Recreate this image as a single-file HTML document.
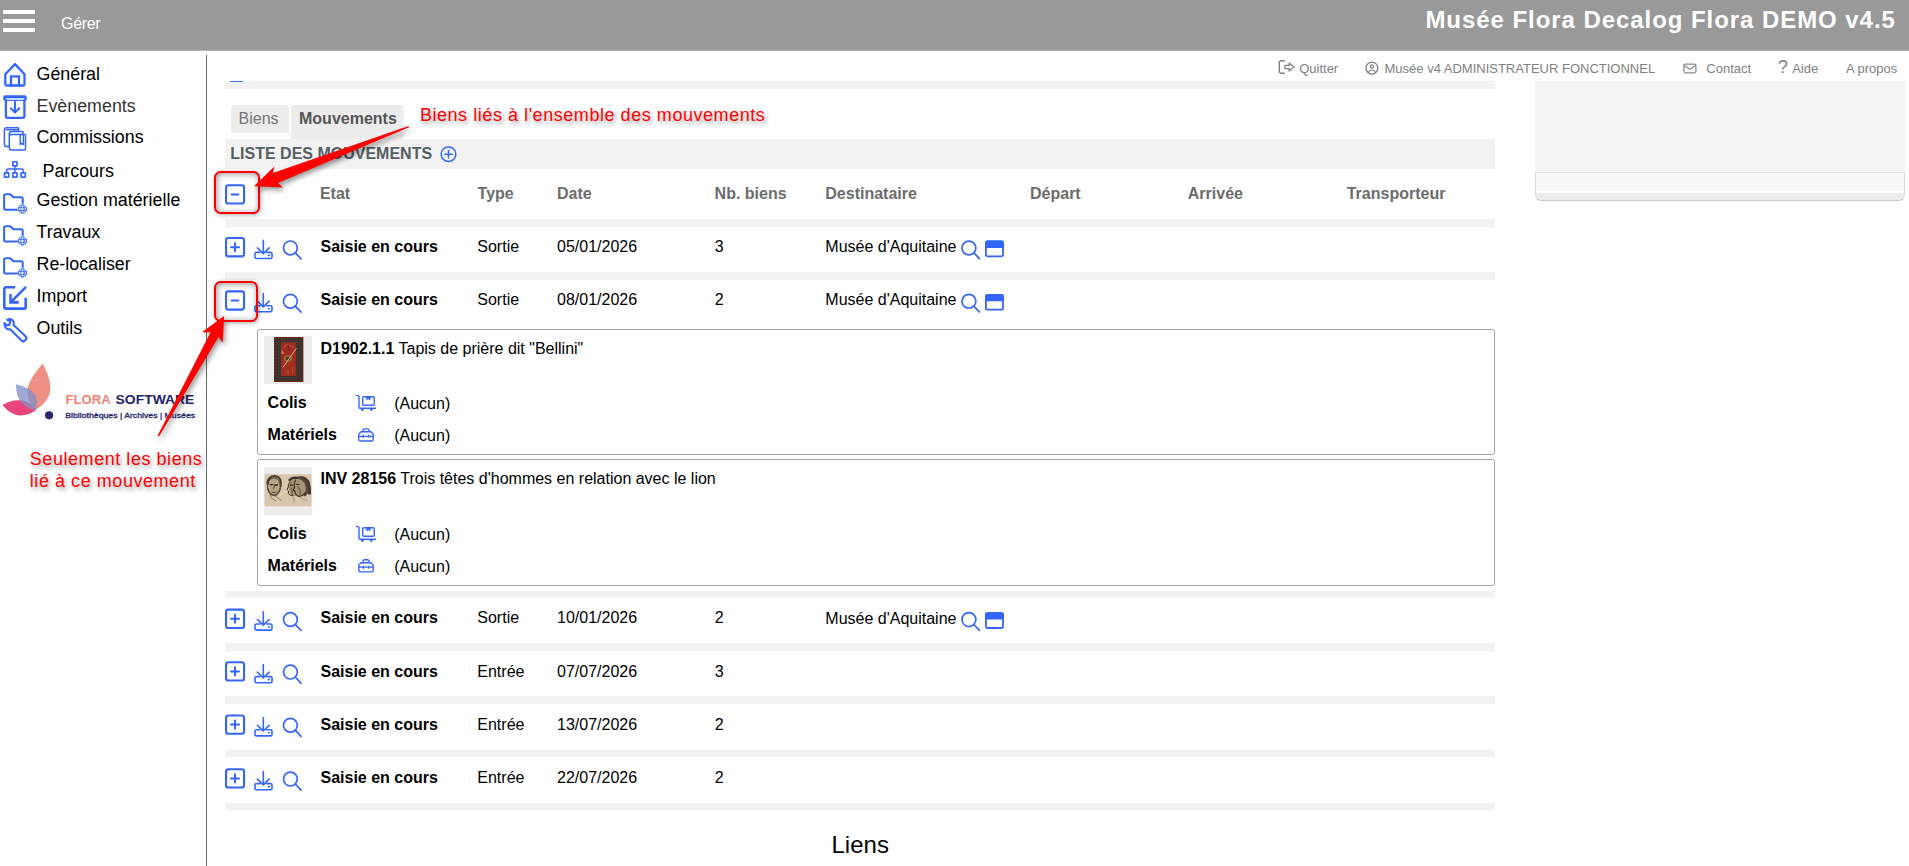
<!DOCTYPE html>
<html lang="fr"><head><meta charset="utf-8"><title>Flora</title>
<style>
*{box-sizing:border-box}
html,body{margin:0;padding:0}
body{width:1909px;height:866px;position:relative;overflow:hidden;background:#fff;font-family:"Liberation Sans",Arial,sans-serif;color:#000}
.abs{position:absolute}
svg{position:absolute;overflow:visible}
#top{left:0;top:0;width:1909px;height:50px;background:#999;border-bottom:1px solid #b2b2b2;height:51px}
#top .bar{position:absolute;left:3px;width:32px;height:4.3px;background:#fff}
#top .gerer{position:absolute;left:61px;top:14.5px;font-size:16px;line-height:18px;color:#fff;letter-spacing:-0.3px}
#top .title{position:absolute;right:13.2px;top:5.5px;font-size:24px;line-height:28px;font-weight:bold;color:#fff;white-space:nowrap;letter-spacing:.94px}
.nav{position:absolute;left:36.5px;font-size:17.85px;line-height:20px;white-space:nowrap;color:#000}
#vline{left:206px;top:55px;width:1px;height:811px;background:#6e6e6e}
.um{position:absolute;top:60.6px;font-size:13px;line-height:16px;color:#7f7f7f;white-space:nowrap}
.band{position:absolute;left:225px;width:1270px;background:#f2f2f2}
.th{position:absolute;top:184px;font-size:16px;line-height:18px;font-weight:bold;color:#6c6c6c;white-space:nowrap}
.td{position:absolute;font-size:16px;line-height:18px;white-space:nowrap}
.b{font-weight:bold}
.card{position:absolute;left:257px;width:1238px;border:1px solid #a4a4a4;border-radius:2.5px;background:#fff}
.thumb{position:absolute;left:264px;width:48px;height:48px;background:#ececec;overflow:hidden}
.red{color:#f00;position:absolute;white-space:nowrap;font-size:18px;line-height:21.3px;letter-spacing:.55px;text-shadow:2px 3px 4px rgba(0,0,0,.38)}
.rbox{position:absolute;border:2px solid #f00;border-radius:6.5px;box-shadow:1px 1px 5px rgba(0,0,0,.33), inset 1px 1px 6px rgba(0,0,0,.42)}
</style></head><body>
<div id="top" class="abs">
 <div class="bar" style="top:10.2px"></div><div class="bar" style="top:19px"></div><div class="bar" style="top:28px"></div>
 <div class="gerer">Gérer</div>
 <div class="title">Musée Flora Decalog Flora DEMO v4.5</div>
</div>
<div class="nav" style="top:63.56px;left:36.5px;color:#000">Général</div>
<div class="nav" style="top:95.56px;left:36.5px;color:#333">Evènements</div>
<div class="nav" style="top:126.96px;left:36.5px;color:#000">Commissions</div>
<div class="nav" style="top:160.56px;left:42.5px;color:#000">Parcours</div>
<div class="nav" style="top:190.16px;left:36.5px;color:#000">Gestion matérielle</div>
<div class="nav" style="top:222.16px;left:36.5px;color:#000">Travaux</div>
<div class="nav" style="top:254.26px;left:36.5px;color:#000">Re-localiser</div>
<div class="nav" style="top:285.96px;left:36.5px;color:#000">Import</div>
<div class="nav" style="top:317.96px;left:36.5px;color:#000">Outils</div>
<svg class="abs" style="left:0;top:0" width="210" height="350" viewBox="0 0 210 350">
<g fill="none" stroke="#3366ff" stroke-width="2.3" stroke-linejoin="round" stroke-linecap="round">
<!-- home -->
<path d="M5.3 74.3L15 64.1L24.5 74.3V84.2a1.3 1.3 0 0 1-1.3 1.3H6.6a1.3 1.3 0 0 1-1.3-1.3Z"/>
<path d="M11 85.5V76.4H19V85.5" stroke-linejoin="miter"/>
<!-- archive in -->
<rect x="3.2" y="95.2" width="23.6" height="5.7" rx="2.2" fill="#3366ff" stroke="none"/><path d="M5.6 99.05H24.4" stroke="#fff" stroke-width="1.5" stroke-linecap="butt"/>
<path d="M5.9 100.5V116.3a1.6 1.6 0 0 0 1.6 1.6H22.8a1.6 1.6 0 0 0 1.6-1.6V100.5"/>
<path d="M15 102V112.3M10.9 108.3L15 112.5L19.3 108.3" stroke-width="2"/>
<!-- commissions -->
<g stroke-width="1.5">
<path d="M18.6 131.2V128.5a.7 .7 0 0 0-.7-.7H6.6a2.2 2.2 0 0 0-2.2 2.2V144.3a2.2 2.2 0 0 0 2.2 2.2H8.8"/>
<path d="M6.6 129.8H18.6"/>
<path d="M23.1 134.2V132.3a.7 .7 0 0 0-.7-.7H11.5a2.2 2.2 0 0 0-2.2 2.2V147.8a2.2 2.2 0 0 0 2.2 2.2H24.8a.7 .7 0 0 0 .7-.7V135.3a.7 .7 0 0 0-.7-.7H11.4a1.5 1.5 0 0 1-1.9-1"/>
<path d="M20.2 135V144.6L21.8 143.3L23.4 144.6V135" stroke-width="1.4"/>
</g>
<!-- import -->
<g stroke-width="2.6" stroke-linecap="butt" stroke-linejoin="miter"><path d="M15.2 287.2H5.9a1.6 1.6 0 0 0-1.6 1.6V307a1.6 1.6 0 0 0 1.6 1.6H24.1a1.6 1.6 0 0 0 1.6-1.6V297.7"/>
<path d="M26 286.9L11.3 301.6M10.5 294V302.4H18.8"/></g>
</g>
<!-- sitemap -->
<g fill="none" stroke="#3366ff" stroke-width="1.7" stroke-linejoin="round">
<rect x="12.85" y="161.75" width="4.2" height="4.2" rx=".5"/>
<rect x="4.5" y="172.95" width="4.2" height="4.2" rx=".5"/><rect x="12.8" y="172.95" width="4.2" height="4.2" rx=".5"/><rect x="21.1" y="172.95" width="4.2" height="4.2" rx=".5"/>
<path d="M14.9 166.4V172.6M6.6 172.6V170.4a1.5 1.5 0 0 1 1.5-1.5H21.7a1.5 1.5 0 0 1 1.5 1.5V172.6" stroke-width="1.5"/>
</g>
<g transform="translate(0,0.0)" fill="none" stroke="#3366ff" stroke-width="2.05" stroke-linejoin="round" stroke-linecap="round">
<path d="M17 209.7H5.6a1.5 1.5 0 0 1-1.5-1.5V195.8a1.5 1.5 0 0 1 1.5-1.5H10.3L13.3 197.3H21.2a1.5 1.5 0 0 1 1.5 1.5V203.3"/>
<g stroke-width="0.9"><circle cx="22.5" cy="209.1" r="4.1"/><ellipse cx="22.5" cy="209.1" rx="1.7" ry="4.1"/><path d="M18.6 207.7h7.8M18.6 210.5h7.8"/></g></g><g transform="translate(0,31.9)" fill="none" stroke="#3366ff" stroke-width="2.05" stroke-linejoin="round" stroke-linecap="round">
<path d="M17 209.7H5.6a1.5 1.5 0 0 1-1.5-1.5V195.8a1.5 1.5 0 0 1 1.5-1.5H10.3L13.3 197.3H21.2a1.5 1.5 0 0 1 1.5 1.5V203.3"/>
<g stroke-width="0.9"><circle cx="22.5" cy="209.1" r="4.1"/><ellipse cx="22.5" cy="209.1" rx="1.7" ry="4.1"/><path d="M18.6 207.7h7.8M18.6 210.5h7.8"/></g></g><g transform="translate(0,63.9)" fill="none" stroke="#3366ff" stroke-width="2.05" stroke-linejoin="round" stroke-linecap="round">
<path d="M17 209.7H5.6a1.5 1.5 0 0 1-1.5-1.5V195.8a1.5 1.5 0 0 1 1.5-1.5H10.3L13.3 197.3H21.2a1.5 1.5 0 0 1 1.5 1.5V203.3"/>
<g stroke-width="0.9"><circle cx="22.5" cy="209.1" r="4.1"/><ellipse cx="22.5" cy="209.1" rx="1.7" ry="4.1"/><path d="M18.6 207.7h7.8M18.6 210.5h7.8"/></g></g>
<!-- wrench -->
<path fill="none" stroke="#3366ff" stroke-width="2.1" stroke-linejoin="round" stroke-linecap="round" d="M13.5 324.9L25.3 335.9A3 3 0 0 1 21.2 340.3L10.2 329.3C7.5 329.8 4.6 327.8 4.4 323.1C5.5 324.9 7.6 325.4 9.4 324.7L10.2 321.2L7.2 319.8C9.2 318.5 12.8 318.9 13.8 322.2Z"/>
</svg>
<svg class="abs" style="left:0;top:355px" width="206" height="70" viewBox="0 355 206 70">
<path d="M42.7 363.4C47 372 52.5 383 49.5 394C47.5 401 41 407 34.5 410.5C28 402 25.5 392 29 384C32 376 39 368 42.7 363.4Z" fill="#ee8f84"/>
<path d="M2.5 404.9C10 400 22 398.5 28 402.5C31.5 405 34 408 36 410.3C30 414.5 22 417 15 414.5C9.5 412.5 5.5 408.5 2.5 404.9Z" fill="#e8457a"/>
<path d="M15.9 384.3C24 386 33 390 36.3 397C37.5 401 37 406 35.5 410.3C28 409 21 404 18 397C16.5 393 16 388 15.9 384.3Z" fill="#7f8fc8" fill-opacity=".75"/>
<circle cx="49.1" cy="415.3" r="4.1" fill="#2b2a6e"/>
<text x="65.6" y="404.4" font-family="Liberation Sans, Arial, sans-serif" font-weight="bold" font-size="13.5" fill="#ee8377" textLength="45" lengthAdjust="spacingAndGlyphs">FLORA</text>
<text x="115.6" y="404.4" font-family="Liberation Sans, Arial, sans-serif" font-weight="bold" font-size="13.5" fill="#25246b" textLength="78.7" lengthAdjust="spacingAndGlyphs">SOFTWARE</text>
<text x="65.3" y="417.8" font-family="Liberation Sans, Arial, sans-serif" font-weight="normal" stroke="#2b2a6e" stroke-width=".3" font-size="7.2" fill="#2b2a6e" textLength="129.8" lengthAdjust="spacingAndGlyphs">Bibliothèques | Archives | Musées</text>
</svg>
<div id="vline" class="abs"></div>
<svg class="abs" style="left:1270px;top:56px" width="130" height="24" viewBox="1270 56 130 24" fill="none" stroke="#7f7f7f" stroke-width="1.4" stroke-linecap="round" stroke-linejoin="round">
<path d="M1284.3 60.8H1281.2a1.9 1.9 0 0 0-1.9 1.9V71.3a1.9 1.9 0 0 0 1.9 1.9H1284.3"/>
<path d="M1284.9 65.3H1289.2V62.9L1294.1 67L1289.2 71.1V68.7H1284.9Z" stroke-width="1.3"/>
<circle cx="1371.9" cy="68.1" r="5.95" stroke-width="1.3"/><circle cx="1371.9" cy="66.5" r="1.6" stroke-width="1.2"/><path d="M1368.3 72.4a3.9 3.9 0 0 1 7.2 0" stroke-width="1.2"/>
</svg>
<div class="um" style="left:1299.2px">Quitter</div>
<div class="um" style="left:1384.5px">Musée v4 ADMINISTRATEUR FONCTIONNEL</div>
<svg class="abs" style="left:1680px;top:60px" width="20" height="16" viewBox="1680 60 20 16" fill="none" stroke="#8a8a8a" stroke-width="1.25" stroke-linejoin="round"><rect x="1683.9" y="64" width="12" height="8.8" rx="1.5"/><path d="M1684.3 65.5L1689.9 69.3L1695.5 65.5"/></svg>
<div class="um" style="left:1706.3px">Contact</div>
<div class="um" style="left:1777.8px;font-size:18.5px;line-height:20px;top:57.2px">?</div>
<div class="um" style="left:1792.2px">Aide</div>
<div class="um" style="left:1845.9px">A propos</div>
<div class="abs" style="left:1535px;top:81px;width:370px;height:91px;background:#f4f4f4"></div>
<div class="abs" style="left:1535px;top:171.5px;width:370px;height:29.5px;background:#f8f8f8;border:1px solid #d9d9d9;border-top-color:#e0e0e0;border-bottom-color:#c8c8c8;border-radius:0 0 6px 6px;overflow:hidden"><div class="abs" style="left:0;top:18.5px;width:370px;height:1.5px;background:#fff"></div><div class="abs" style="left:0;top:20px;width:370px;height:9px;background:#ececec"></div></div>
<div class="band" style="top:81px;height:8px"></div>
<div class="abs" style="left:230.3px;top:81px;width:13px;height:1.2px;background:#3f70ff"></div>
<div class="abs" style="left:231px;top:105px;width:58px;height:28px;background:#ececec;border-radius:4px 4px 0 0"></div>
<div class="abs" style="left:291.3px;top:105px;width:111.7px;height:34.5px;background:#ececec;border-radius:4px 4px 0 0;box-shadow:1px 0 1px rgba(0,0,0,.06)"></div>
<div class="td" style="left:238.6px;top:110.2px;color:#757575">Biens</div>
<div class="td b" style="left:299px;top:110.2px;color:#555">Mouvements</div>
<div class="band" style="top:139.3px;height:29.5px"></div>
<div class="td b" style="left:230.3px;top:145px;color:#555e63">LISTE DES MOUVEMENTS</div>
<svg class="abs" style="left:438px;top:144px" width="22" height="22" viewBox="438 144 22 22" fill="none" stroke="#3366ff" stroke-width="1.5" stroke-linecap="round"><circle cx="448.5" cy="154.2" r="7.3"/><path d="M444.8 154.2H452.2M448.5 150.5V157.9"/></svg>
<div class="th" style="left:319.9px;top:185.15px">Etat</div>
<div class="th" style="left:477.6px;top:185.15px">Type</div>
<div class="th" style="left:557px;top:185.15px">Date</div>
<div class="th" style="left:714.6px;top:185.15px">Nb. biens</div>
<div class="th" style="left:825.3px;top:185.15px">Destinataire</div>
<div class="th" style="left:1030px;top:185.15px">Départ</div>
<div class="th" style="left:1187.8px;top:185.15px">Arrivée</div>
<div class="th" style="left:1346.7px;top:185.15px">Transporteur</div>
<div class="band" style="top:219px;height:8px"></div>
<div class="band" style="top:272.4px;height:7.8px"></div>
<div class="band" style="top:590.5px;height:7.2px"></div>
<div class="band" style="top:643.4px;height:7.2px"></div>
<div class="band" style="top:696.4px;height:7.2px"></div>
<div class="band" style="top:749.5px;height:7.2px"></div>
<div class="band" style="top:803.2px;height:7.3px"></div>
<div class="card" style="top:329px;height:126px"></div>
<div class="thumb" style="top:336px"><svg style="left:0;top:0" width="48" height="48" viewBox="0 0 48 48"><defs><filter id="bl1" x="-5%" y="-5%" width="110%" height="110%"><feGaussianBlur stdDeviation=".45"/></filter><pattern id="cp" width="3.1" height="3.3" patternUnits="userSpaceOnUse"><rect width="3.1" height="3.3" fill="#2e2b2c"/><circle cx=".8" cy=".9" r=".6" fill="#86402a"/><circle cx="2.3" cy="2.4" r=".55" fill="#8c7442"/><circle cx="2.4" cy=".7" r=".45" fill="#262c44"/></pattern></defs>
<g filter="url(#bl1)"><rect x="10" y="1" width="29.4" height="45" fill="#7a2416"/><rect x="10.7" y="1.8" width="28" height="43.4" fill="url(#cp)"/><rect x="16.9" y="6.4" width="15" height="33.6" fill="#a02d1d"/>
<path d="M18.5 12L23 8.5L30 11" stroke="#c8967a" stroke-width=".5" fill="none"/><path d="M24.3 8.5V14.5" stroke="#3a2a2a" stroke-width=".7"/><path d="M17.5 13.5L20.5 17.5L17.3 18Z" fill="#c8806a"/>
<ellipse cx="24" cy="22.5" rx="4" ry="3.3" fill="#92722e"/><ellipse cx="24" cy="22.6" rx="2.3" ry="1.9" fill="#5a2a2c"/>
<path d="M32.4 12.3L19 31.3" stroke="#f0dcd0" stroke-width=".75"/><path d="M24 34v5M28.5 31v6" stroke="#c05a48" stroke-width="1.2" opacity=".7"/></g></svg></div>
<div class="td" style="left:320.5px;top:340.45px"><span class="b">D1902.1.1</span> Tapis de prière dit "Bellini"</div>
<div class="td b" style="left:267.6px;top:394.15px">Colis</div><div class="td" style="left:394.2px;top:394.75px">(Aucun)</div>
<div class="td b" style="left:267.6px;top:426.25px">Matériels</div><div class="td" style="left:394.2px;top:426.85px">(Aucun)</div>
<div class="card" style="top:459px;height:127px"></div>
<div class="thumb" style="top:467px"><svg style="left:0;top:0" width="48" height="48" viewBox="0 0 48 48"><defs><filter id="bl2" x="-5%" y="-5%" width="110%" height="110%"><feGaussianBlur stdDeviation=".55"/></filter></defs>
<rect x=".6" y="7.2" width="46.8" height="32.1" fill="#d9c6ad"/>
<g filter="url(#bl2)" fill="none" stroke="#3e3228" stroke-linecap="round">
<ellipse cx="10" cy="19.5" rx="6.6" ry="8.6" fill="#b9a48a" stroke-width=".9"/>
<path d="M3.6 17C3 11 8 8.5 12 9.3C16 10 17.5 14 16.6 19" stroke-width="2.2" stroke="#4a3c30"/>
<path d="M6.5 17.6h2.2M11 18h2.4" stroke-width="1.3" stroke="#2a2018"/><path d="M10.3 18.5L9.8 22M8 25.2Q10 26.2 12.2 25" stroke-width=".9"/>
<path d="M4 22Q6 29 11 28.5Q15 27 16.3 21" stroke-width="1.4" stroke="#5a4a3c"/>
<path d="M11 29L17.5 33.5M6 28.5Q8 33 12 34" stroke-width=".7" stroke="#6a5a4a"/>
<path d="M25 14Q27 10 33 10.5Q42 9 44.5 16Q45.5 22 44 27Q40 30 35 29.5Q30 29 26 27L24.5 21Z" fill="#a8937a" stroke="none"/><path d="M25.5 13Q28 10 33 10.8Q41 9 44.5 15Q46 21 46 26.5" stroke-width="2.2" stroke="#3a2e24"/><path d="M40 12Q44.5 15 44.8 21L45 26" stroke-width="3" stroke="#4a3c30"/>
<path d="M36 11Q42 13 43 20Q43.5 25 41 28" stroke-width="2.4" stroke="#54463a"/>
<path d="M26 15Q23.5 18 24.3 20L22.8 22.8L24.5 24L24.3 26.5Q25.5 29 29 28.5" stroke-width="1" stroke="#33281e"/>
<path d="M31.5 13Q29.5 17 30.5 20L29.2 23L31 24.2Q31 28 35 29.5Q39 29 41 26" stroke-width="1.1" stroke="#33281e"/>
<path d="M26.5 18.2h2M32.5 17.5h2.4" stroke-width="1.2" stroke="#2a2018"/>
<path d="M27 21Q29 24 28 27M34 20Q37 23 36 28" stroke-width="1.6" stroke="#6a5a48" opacity=".8"/>
<path d="M29 29.5Q31 33 30 36M36 30Q39 33 43 33.5" stroke-width=".6" stroke="#7a6a58"/>
</g><path d="M16 28.5L24 23.5" stroke="#efe4d4" stroke-width=".7"/></svg></div>
<div class="td" style="left:320.5px;top:470.05px"><span class="b">INV 28156</span> Trois têtes d'hommes en relation avec le lion</div>
<div class="td b" style="left:267.6px;top:524.95px">Colis</div><div class="td" style="left:394.2px;top:525.55px">(Aucun)</div>
<div class="td b" style="left:267.6px;top:557.15px">Matériels</div><div class="td" style="left:394.2px;top:557.75px">(Aucun)</div>
<div class="td b" style="left:320.5px;top:237.55px">Saisie en cours</div><div class="td" style="left:477.3px;top:237.55px">Sortie</div><div class="td" style="left:557px;top:237.55px">05/01/2026</div><div class="td" style="left:714.8px;top:237.55px">3</div><div class="td" style="left:825.3px;top:237.85px">Musée d'Aquitaine</div>
<div class="td b" style="left:320.5px;top:290.75px">Saisie en cours</div><div class="td" style="left:477.3px;top:290.75px">Sortie</div><div class="td" style="left:557px;top:290.75px">08/01/2026</div><div class="td" style="left:714.8px;top:290.75px">2</div><div class="td" style="left:825.3px;top:291.05px">Musée d'Aquitaine</div>
<div class="td b" style="left:320.5px;top:609.25px">Saisie en cours</div><div class="td" style="left:477.3px;top:609.25px">Sortie</div><div class="td" style="left:557px;top:609.25px">10/01/2026</div><div class="td" style="left:714.8px;top:609.25px">2</div><div class="td" style="left:825.3px;top:609.55px">Musée d'Aquitaine</div>
<div class="td b" style="left:320.5px;top:662.75px">Saisie en cours</div><div class="td" style="left:477.3px;top:662.75px">Entrée</div><div class="td" style="left:557px;top:662.75px">07/07/2026</div><div class="td" style="left:714.8px;top:662.75px">3</div>
<div class="td b" style="left:320.5px;top:715.95px">Saisie en cours</div><div class="td" style="left:477.3px;top:715.95px">Entrée</div><div class="td" style="left:557px;top:715.95px">13/07/2026</div><div class="td" style="left:714.8px;top:715.95px">2</div>
<div class="td b" style="left:320.5px;top:768.85px">Saisie en cours</div><div class="td" style="left:477.3px;top:768.85px">Entrée</div><div class="td" style="left:557px;top:768.85px">22/07/2026</div><div class="td" style="left:714.8px;top:768.85px">2</div>
<svg class="abs" style="left:0;top:0" width="1909" height="866" viewBox="0 0 1909 866" fill="none" stroke="#3366ff" stroke-linecap="round" stroke-linejoin="round"><rect x="226.05" y="185.25" width="18" height="18.3" rx="2.3" stroke-width="2.1"/><path d="M231.6 194.39999999999998H238.4" stroke-width="2"/><rect x="226.05" y="238.05" width="18" height="18.3" rx="2.3" stroke-width="2.1"/><path d="M230.95 247.2H239.05M235 243.15V251.25" stroke-width="2"/><g transform="translate(0,0.00)" stroke-width="1.6"><path d="M263.3 240.3V253M257.4 247.9L263.3 253.6L269.2 247.9"/><path d="M260 252.4H256.5a1.5 1.5 0 0 0-1.5 1.5V257a1.5 1.5 0 0 0 1.5 1.5H270.5a1.5 1.5 0 0 0 1.5-1.5V253.9a1.5 1.5 0 0 0-1.5-1.5H266.7"/><path d="M268.4 255.4H269.4"/></g><g stroke-width="1.7"><circle cx="290.4" cy="247.89999999999998" r="6.9"/><path d="M295.28 252.78L301.00 258.90"/></g><g stroke-width="1.7"><circle cx="968.9" cy="248.0" r="6.95"/><path d="M973.81 252.91L979.50 258.70"/></g><rect x="985.9000000000001" y="241.5" width="17.1" height="14.9" rx="1.8" stroke-width="1.8"/><path d="M985.9000000000001 242.79999999999998a1.3 1.3 0 0 1 1.3-1.3H1001.7a1.3 1.3 0 0 1 1.3 1.3V247.1H985.9000000000001Z" fill="#3366ff" stroke-width="1.8"/><rect x="226.05" y="291.35" width="18" height="18.3" rx="2.3" stroke-width="2.1"/><path d="M231.6 300.5H238.4" stroke-width="2"/><g transform="translate(0,53.30)" stroke-width="1.6"><path d="M263.3 240.3V253M257.4 247.9L263.3 253.6L269.2 247.9"/><path d="M260 252.4H256.5a1.5 1.5 0 0 0-1.5 1.5V257a1.5 1.5 0 0 0 1.5 1.5H270.5a1.5 1.5 0 0 0 1.5-1.5V253.9a1.5 1.5 0 0 0-1.5-1.5H266.7"/><path d="M268.4 255.4H269.4"/></g><g stroke-width="1.7"><circle cx="290.4" cy="301.2" r="6.9"/><path d="M295.28 306.08L301.00 312.20"/></g><g stroke-width="1.7"><circle cx="968.9" cy="301.3" r="6.95"/><path d="M973.81 306.21L979.50 312.00"/></g><rect x="985.9000000000001" y="294.8" width="17.1" height="14.9" rx="1.8" stroke-width="1.8"/><path d="M985.9000000000001 296.1a1.3 1.3 0 0 1 1.3-1.3H1001.7a1.3 1.3 0 0 1 1.3 1.3V300.4H985.9000000000001Z" fill="#3366ff" stroke-width="1.8"/><rect x="226.05" y="609.6499999999999" width="18" height="18.3" rx="2.3" stroke-width="2.1"/><path d="M230.95 618.8H239.05M235 614.7499999999999V622.8499999999999" stroke-width="2"/><g transform="translate(0,371.60)" stroke-width="1.6"><path d="M263.3 240.3V253M257.4 247.9L263.3 253.6L269.2 247.9"/><path d="M260 252.4H256.5a1.5 1.5 0 0 0-1.5 1.5V257a1.5 1.5 0 0 0 1.5 1.5H270.5a1.5 1.5 0 0 0 1.5-1.5V253.9a1.5 1.5 0 0 0-1.5-1.5H266.7"/><path d="M268.4 255.4H269.4"/></g><g stroke-width="1.7"><circle cx="290.4" cy="619.5" r="6.9"/><path d="M295.28 624.38L301.00 630.50"/></g><g stroke-width="1.7"><circle cx="968.9" cy="619.5999999999999" r="6.95"/><path d="M973.81 624.51L979.50 630.30"/></g><rect x="985.9000000000001" y="613.0999999999999" width="17.1" height="14.9" rx="1.8" stroke-width="1.8"/><path d="M985.9000000000001 614.4a1.3 1.3 0 0 1 1.3-1.3H1001.7a1.3 1.3 0 0 1 1.3 1.3V618.6999999999999H985.9000000000001Z" fill="#3366ff" stroke-width="1.8"/><rect x="226.05" y="662.2499999999999" width="18" height="18.3" rx="2.3" stroke-width="2.1"/><path d="M230.95 671.4H239.05M235 667.3499999999999V675.4499999999999" stroke-width="2"/><g transform="translate(0,424.20)" stroke-width="1.6"><path d="M263.3 240.3V253M257.4 247.9L263.3 253.6L269.2 247.9"/><path d="M260 252.4H256.5a1.5 1.5 0 0 0-1.5 1.5V257a1.5 1.5 0 0 0 1.5 1.5H270.5a1.5 1.5 0 0 0 1.5-1.5V253.9a1.5 1.5 0 0 0-1.5-1.5H266.7"/><path d="M268.4 255.4H269.4"/></g><g stroke-width="1.7"><circle cx="290.4" cy="672.1" r="6.9"/><path d="M295.28 676.98L301.00 683.10"/></g><rect x="226.05" y="715.4499999999999" width="18" height="18.3" rx="2.3" stroke-width="2.1"/><path d="M230.95 724.6H239.05M235 720.55V728.65" stroke-width="2"/><g transform="translate(0,477.40)" stroke-width="1.6"><path d="M263.3 240.3V253M257.4 247.9L263.3 253.6L269.2 247.9"/><path d="M260 252.4H256.5a1.5 1.5 0 0 0-1.5 1.5V257a1.5 1.5 0 0 0 1.5 1.5H270.5a1.5 1.5 0 0 0 1.5-1.5V253.9a1.5 1.5 0 0 0-1.5-1.5H266.7"/><path d="M268.4 255.4H269.4"/></g><g stroke-width="1.7"><circle cx="290.4" cy="725.3000000000001" r="6.9"/><path d="M295.28 730.18L301.00 736.30"/></g><rect x="226.05" y="769.2499999999999" width="18" height="18.3" rx="2.3" stroke-width="2.1"/><path d="M230.95 778.4H239.05M235 774.3499999999999V782.4499999999999" stroke-width="2"/><g transform="translate(0,531.20)" stroke-width="1.6"><path d="M263.3 240.3V253M257.4 247.9L263.3 253.6L269.2 247.9"/><path d="M260 252.4H256.5a1.5 1.5 0 0 0-1.5 1.5V257a1.5 1.5 0 0 0 1.5 1.5H270.5a1.5 1.5 0 0 0 1.5-1.5V253.9a1.5 1.5 0 0 0-1.5-1.5H266.7"/><path d="M268.4 255.4H269.4"/></g><g stroke-width="1.7"><circle cx="290.4" cy="779.1" r="6.9"/><path d="M295.28 783.98L301.00 790.10"/></g><g transform="translate(0,0.00)" stroke-width="1.4"><path d="M356.5 395.6H358.2a.8 .8 0 0 1 .8 .8V407.5a.8 .8 0 0 0 .8 .8H375.5"/><rect x="362.7" y="396.8" width="11.6" height="8.4" rx="1.2" stroke-width="1.4"/><path d="M366.6 396.8h3.6v3.1l-1.8-.9l-1.8 .9Z" fill="#3366ff" stroke-width=".5"/><circle cx="362.3" cy="409.6" r=".9" fill="#3366ff" stroke-width="1"/><circle cx="371.3" cy="409.6" r=".9" fill="#3366ff" stroke-width="1"/></g><g transform="translate(0,0.00)" stroke-width="1.4"><path d="M361 431.8H371L373.2 434.2V439.6a1.4 1.4 0 0 1-1.4 1.4H360.2a1.4 1.4 0 0 1-1.4-1.4V434.2Z"/><path d="M363 431.6V430.2a1.3 1.3 0 0 1 1.3-1.3H367.7a1.3 1.3 0 0 1 1.3 1.3V431.6"/><path d="M358.9 436.3H373.1M363.3 435.2V437.5M368.8 435.2V437.5" stroke-width="1.2"/></g><g transform="translate(0,131.00)" stroke-width="1.4"><path d="M356.5 395.6H358.2a.8 .8 0 0 1 .8 .8V407.5a.8 .8 0 0 0 .8 .8H375.5"/><rect x="362.7" y="396.8" width="11.6" height="8.4" rx="1.2" stroke-width="1.4"/><path d="M366.6 396.8h3.6v3.1l-1.8-.9l-1.8 .9Z" fill="#3366ff" stroke-width=".5"/><circle cx="362.3" cy="409.6" r=".9" fill="#3366ff" stroke-width="1"/><circle cx="371.3" cy="409.6" r=".9" fill="#3366ff" stroke-width="1"/></g><g transform="translate(0,130.90)" stroke-width="1.4"><path d="M361 431.8H371L373.2 434.2V439.6a1.4 1.4 0 0 1-1.4 1.4H360.2a1.4 1.4 0 0 1-1.4-1.4V434.2Z"/><path d="M363 431.6V430.2a1.3 1.3 0 0 1 1.3-1.3H367.7a1.3 1.3 0 0 1 1.3 1.3V431.6"/><path d="M358.9 436.3H373.1M363.3 435.2V437.5M368.8 435.2V437.5" stroke-width="1.2"/></g></svg>
<div class="abs" style="left:831.5px;top:831px;font-size:24px;line-height:28px;white-space:nowrap">Liens</div>
<div class="rbox" style="left:213.5px;top:171.3px;width:46.9px;height:43.2px"></div>
<div class="rbox" style="left:214.2px;top:280.6px;width:44.3px;height:41.3px"></div>
<svg class="abs" style="left:0;top:0;filter:drop-shadow(2px 3px 2.5px rgba(0,0,0,.4))" width="1909" height="866" viewBox="0 0 1909 866">
<path d="M408.6 126.0L409.0 127.3L277.9 183L283 187.6L254.1 186.3L274.3 166.4L272.9 172.9Z" fill="#f00"/>
<path d="M157.6 435.8L210.6 332.3L201.9 332.3L224.1 316.1L222.7 342.7L218.5 336.9L159 436.6Z" fill="#f00"/>
</svg>
<div class="red" style="left:419.9px;top:104.7px">Biens liés à l'ensemble des mouvements</div>
<div class="red" style="left:29.8px;top:449.3px;line-height:21.5px">Seulement les biens<br>lié à ce mouvement</div>
</body></html>
